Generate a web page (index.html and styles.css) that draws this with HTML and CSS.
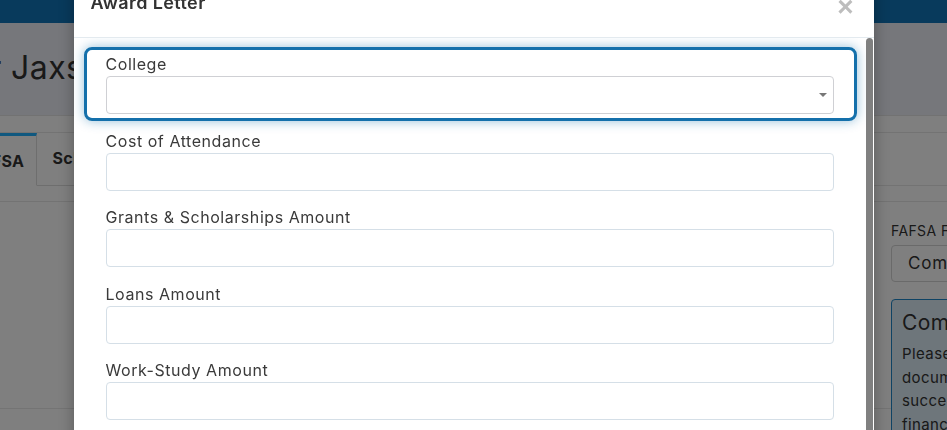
FILE: index.html
```html
<!DOCTYPE html>
<html lang="en">
<head>
    <meta charset="UTF-8">
    <meta name="viewport" content="width=device-width, initial-scale=1.0">
    <title>Award Letter</title>
    <link rel="stylesheet" href="styles.css">
</head>
<body>
    <div class="page">
        <div class="topbar"></div>
        <div class="page-head">
            <h1 class="page-title">Financial Aid for Jaxson Miller</h1>
        </div>
        <div class="page-main">
            <ul class="tabs">
                <li class="tab active">FAFSA</li>
                <li class="tab">Scholarships</li>
                <li class="tab">Award Letters</li>
            </ul>
            <div class="tab-pane">
                <div class="pane-main">
                    <div class="pane-card"></div>
                </div>
                <div class="pane-status">
                    <div class="status-label">FAFSA Filing Status</div>
                    <div class="status-select">Completed</div>
                    <div class="status-note">
                        <h4>Completed</h4>
                        <p>Please review the following<br>documents to make sure they were<br>successfully submitted with your<br>financial aid application.</p>
                    </div>
                </div>
            </div>
        </div>
    </div>

    <div class="backdrop"></div>

    <div class="modal">
        <div class="modal-dialog">
            <div class="modal-header">
                <h4 class="modal-title">Award Letter</h4>
                <button class="close" type="button">&times;</button>
            </div>
            <div class="modal-body">
                <form class="modal-form">
                    <div class="form-group focused">
                        <label for="college">College</label>
                        <div class="select-wrap">
                            <select class="form-control select" id="college">
                                <option></option>
                            </select>
                            <svg class="caret" width="8" height="4" viewBox="0 0 8 4"><path d="M0 0h8L4 4z" fill="#777"/></svg>
                        </div>
                    </div>
                    <div class="form-group">
                        <label for="coa">Cost of Attendance</label>
                        <input class="form-control" id="coa" type="text">
                    </div>
                    <div class="form-group">
                        <label for="grants">Grants &amp; Scholarships Amount</label>
                        <input class="form-control" id="grants" type="text">
                    </div>
                    <div class="form-group">
                        <label for="loans">Loans Amount</label>
                        <input class="form-control" id="loans" type="text">
                    </div>
                    <div class="form-group">
                        <label for="work">Work-Study Amount</label>
                        <input class="form-control" id="work" type="text">
                    </div>
                    <div class="form-group">
                        <label for="other">Other Aid Amount</label>
                        <input class="form-control" id="other" type="text">
                    </div>
                </form>
                <!-- scroll track for the long form -->
                <div class="scroll-track">
                    <div class="scroll-thumb"></div>
                </div>
            </div>
        </div>
    </div>
</body>
</html>
```

FILE: styles.css
```css
body {
    font-family: Inter, "Noto Sans", sans-serif;
    letter-spacing: 0.4px;
    margin: 0;
    padding: 0;
    background-color: #fff;
    color: #333;
    overflow: hidden;
}
.page {
    width: 100%;
}
.topbar {
    height: 23px;
    background-color: #1074b8;
}
.page-head {
    height: 93px;
    background-color: #eceef6;
    border-bottom: 1px solid #e4e4e4;
    padding-top: 14px;
    box-sizing: border-box;
}
.page-title {
    margin: 0 0 0 -249px;
    font-size: 32px;
    font-weight: 400;
    line-height: 62px;
    white-space: nowrap;
    color: #333;
}
.page-main {
    margin-left: -44px;
    width: 1240px;
    padding-top: 16px;
}
.tabs {
    display: flex;
    margin: 0;
    padding: 0;
    list-style: none;
    height: 54px;
    border-top: 1px solid #e6e6e6;
    border-bottom: 1px solid #e6e6e6;
    box-sizing: border-box;
}
.tab {
    padding: 0 15px;
    font-size: 16px;
    font-weight: 700;
    line-height: 50px;
    border-right: 1px solid #ddd;
    margin-bottom: -1px;
    border-bottom: 1px solid #ddd;
    color: #333;
}
.tab.active {
    padding-right: 12px;
    border-top: 3px solid #20b0ff;
    border-bottom-color: #fff;
    background-color: #fff;
}
.tab-pane {
    display: flex;
    margin-top: 15px;
    border-top: 1px solid #e6e6e6;
}
.pane-main {
    flex: 0 0 935px;
}
.pane-card {
    height: 206px;
    border-bottom: 1px solid #e8e8e8;
}
.pane-status {
    flex: 1;
    padding-top: 19px;
}
.status-label {
    font-size: 14px;
    line-height: 20px;
    margin-bottom: 4px;
}
.status-select {
    height: 37px;
    box-sizing: border-box;
    border: 1px solid #d4d4d4;
    border-radius: 4px;
    padding: 0 16px;
    font-size: 17px;
    letter-spacing: 0.8px;
    line-height: 35px;
    margin-bottom: 17px;
}
.status-note {
    border: 1px solid #1f86c8;
    border-radius: 4px;
    background-color: #dcecf6;
    padding: 8px 10px;
}
.status-note h4 {
    margin: 0 0 4px;
    font-size: 21px;
    font-weight: 400;
    line-height: 30px;
}
.status-note p {
    margin: 0;
    font-size: 15px;
    line-height: 23.5px;
    white-space: nowrap;
}

.backdrop {
    position: fixed;
    top: 0;
    left: 0;
    right: 0;
    bottom: 0;
    background-color: rgba(0, 0, 0, 0.5);
}
.modal {
    position: fixed;
    top: 0;
    left: 0;
    right: 0;
    bottom: 0;
    overflow: hidden;
}
.modal-dialog {
    width: 800px;
    margin: -26px auto 0;
    background-color: #fff;
    border-radius: 6px;
    box-shadow: 0 5px 15px rgba(0, 0, 0, 0.3);
}
.modal-header {
    display: flex;
    justify-content: space-between;
    align-items: flex-start;
    padding: 15px 20px 21px 17px;
    border-bottom: 1px solid #e3eaef;
}
.modal-title {
    margin: 0;
    font-size: 18px;
    font-weight: 600;
    line-height: 27px;
    color: #333;
}
.close {
    border: none;
    background: none;
    padding: 0;
    margin: 4px 0 -4px;
    font-family: Arial, "Liberation Sans", sans-serif;
    font-size: 28px;
    font-weight: 700;
    line-height: 27px;
    color: #bdbdbd;
    cursor: pointer;
}
.modal-body {
    display: flex;
    height: 450px;
    overflow: hidden;
}
.modal-form {
    flex: 1;
    margin: 0;
    padding: 9.25px 9px 9px 10px;
}
.scroll-track {
    width: 8px;
    background-color: #fff;
}
.scroll-thumb {
    height: 430px;
    margin-right: 1px;
    border-radius: 4px 4px 0 0;
    background-color: #808080;
}
.form-group {
    border: 3px solid transparent;
    border-radius: 8px;
    padding: 3px 20px 4px 19px;
    margin-bottom: 2.5px;
}
.form-group.focused {
    border-color: #1470ab;
    box-shadow: 0 0 12px rgba(20, 112, 171, 0.45);
}
.form-group label {
    display: block;
    font-size: 16px;
    letter-spacing: 0.55px;
    line-height: 22px;
    margin-bottom: 1px;
    color: #3a3a3a;
}
.form-control {
    display: block;
    width: 100%;
    height: 38px;
    box-sizing: border-box;
    border: 1px solid #d5dfe7;
    border-radius: 4px;
    background-color: #fff;
    padding: 6px 12px;
    font-family: inherit;
    font-size: 15px;
    outline: none;
}
.select-wrap {
    position: relative;
}
.select {
    appearance: none;
    -webkit-appearance: none;
    border-color: #cfd0d4;
}
.caret {
    position: absolute;
    right: 7px;
    top: 17px;
}
```
